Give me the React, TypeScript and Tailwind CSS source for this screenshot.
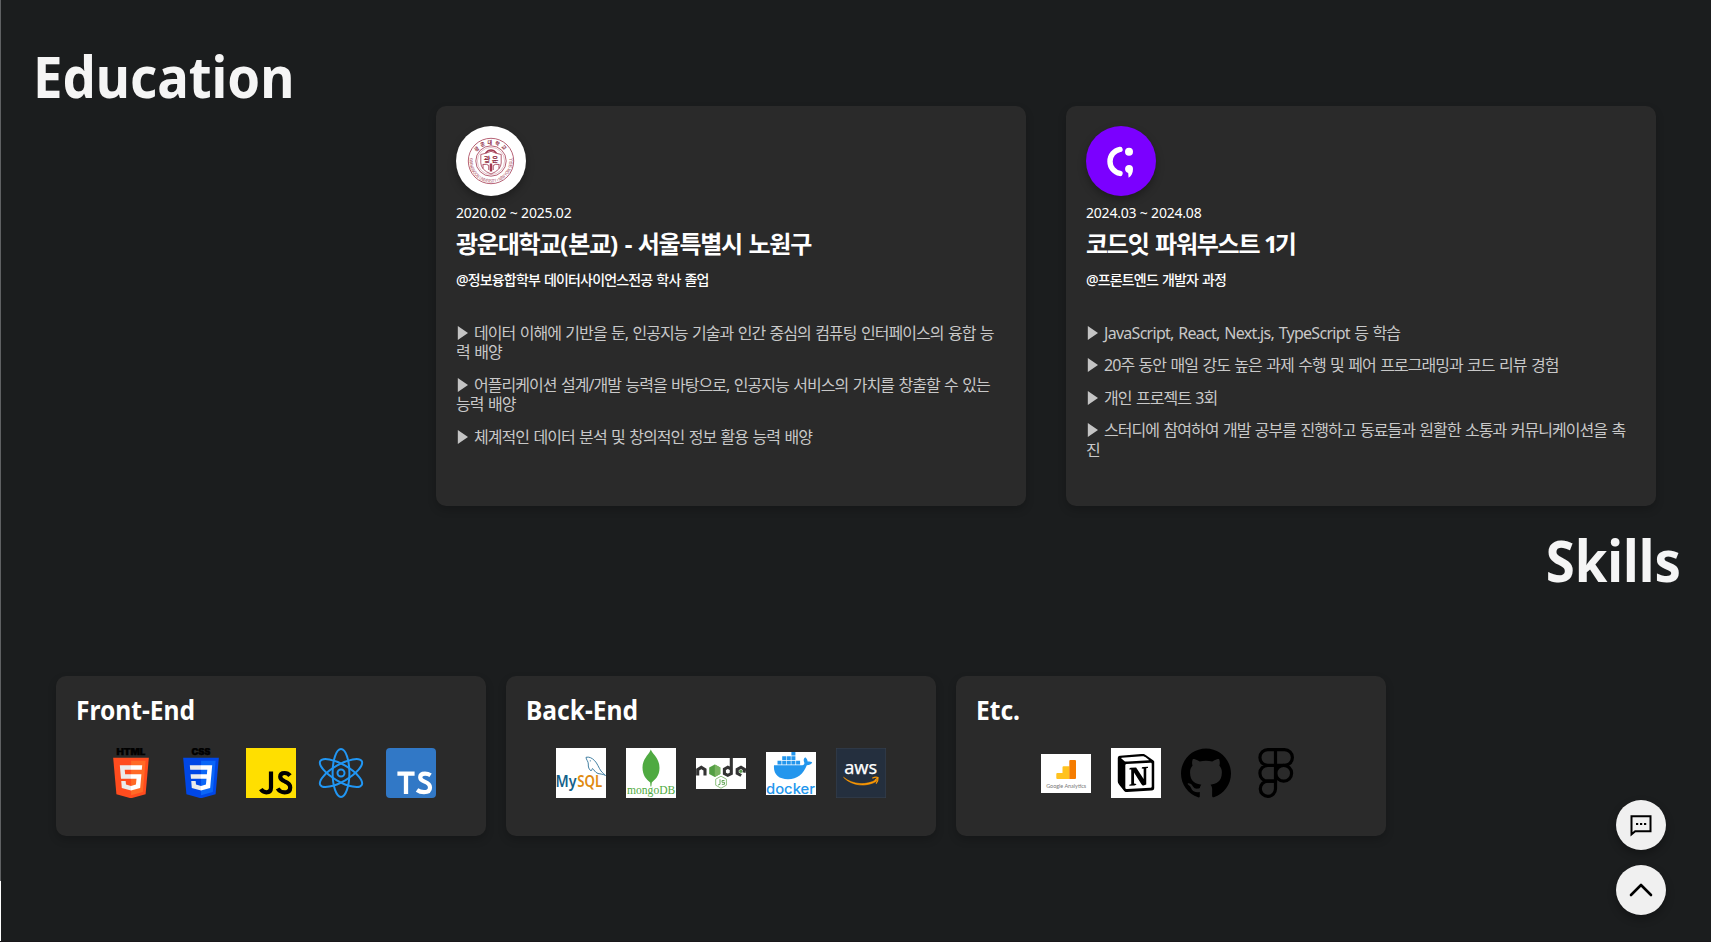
import type { ReactNode } from "react";
import { SiGithub, SiNotion } from "react-icons/si";

const FONT = "font-['Noto_Sans','Noto_Sans_CJK_KR',sans-serif]";

function Tile({ children }: { children: ReactNode }) {
  return <div className="flex size-[50px] shrink-0 items-center justify-center">{children}</div>;
}

function Html5() {
  return (
    <svg viewBox="0 0 50 50" className="size-[50px]">
      <text x="10.4" y="6.8" fontSize="8.6" fontWeight="900" fontFamily="Inter" textLength="29" lengthAdjust="spacingAndGlyphs" fill="#000" stroke="#000" strokeWidth=".4">HTML</text>
      <g transform="translate(4.8 9.8) scale(.0791)">
        <path fill="#ff4c1e" d="M71,460 30,0H481L440,460 255,512z" />
        <path fill="#ff6a26" d="M256,472 405,431 440,37H256z" />
        <path fill="#ebebeb" d="M256,208H181L176,150H256V94H114L129,265H256zM256,355 192,338 188,293H132L139,382 256,414z" />
        <path fill="#fff" d="M255,208V265H325L318,338 255,355V414L371,382 387,208zM255,94V150H392L397,94z" />
      </g>
    </svg>
  );
}

function Css3() {
  return (
    <svg viewBox="0 0 50 50" className="size-[50px]">
      <text x="15.4" y="6.8" fontSize="8.6" fontWeight="900" fontFamily="Inter" textLength="19" lengthAdjust="spacingAndGlyphs" fill="#000" stroke="#000" strokeWidth=".4">CSS</text>
      <g transform="translate(4.8 9.8) scale(.0791)">
        <path fill="#0047e6" d="M71,460 30,0H481L440,460 255,512z" />
        <path fill="#0a66f7" d="M256,472 405,431 440,37H256z" />
        <path fill="#ebebeb" d="M256,94H114L119,150H256zM256,208H124L129,265H256zM256,355 192,338 188,293H132L139,382 256,414z" />
        <path fill="#fff" d="M255,94V150H335L330,208H255V265H325L318,338 255,355V414L371,382 397,94z" />
      </g>
    </svg>
  );
}

function JsLogo() {
  return (
    <svg viewBox="0 0 50 50" className="size-[50px]">
      <rect width="50" height="50" fill="#ffdf00" />
      <path d="M25 23.5V39.5Q25 44.3 20.3 44.3 16.8 44.3 14.8 41.2" fill="none" stroke="#000" strokeWidth="4.2" />
      <path d="M44 27.6Q42 25 38.6 25 34.2 25 34.2 28.8 34.2 31.6 38.8 33.4 44.2 35.3 44.2 39.4 44.2 44.3 38.6 44.3 34 44.3 31.6 40.5" fill="none" stroke="#000" strokeWidth="4.2" />
    </svg>
  );
}

function ReactLogo() {
  return (
    <svg viewBox="0 0 50 50" className="size-[50px]" fill="none" stroke="#2196f3" strokeWidth="2">
      <ellipse cx="25" cy="25" rx="8.4" ry="23.9" />
      <ellipse cx="25" cy="25" rx="8.4" ry="23.9" transform="rotate(60 25 25)" />
      <ellipse cx="25" cy="25" rx="8.4" ry="23.9" transform="rotate(-60 25 25)" />
      <circle cx="25" cy="25" r="3.5" />
    </svg>
  );
}

function TsLogo() {
  return (
    <svg viewBox="0 0 50 50" className="size-[50px]">
      <rect width="50" height="50" rx="4" fill="#3178c6" />
      <path d="M11.4 25.7H28.6M20 25.7V46" fill="none" stroke="#fff" strokeWidth="4.3" />
      <path d="M44.6 27.3Q42 25.6 39 25.6 34.2 25.6 34.2 29.3 34.2 32 38.6 33.6 44 35.5 44 39.5 44 44.2 38 44.2 34 44.2 31 42" fill="none" stroke="#fff" strokeWidth="4.2" />
    </svg>
  );
}

function MySql() {
  return (
    <svg viewBox="0 0 50 50" className="size-[50px]">
      <rect width="50" height="50" fill="#fff" />
      <text x="-.5" y="39" fontSize="16" fontFamily="Noto Sans" fontWeight="600" fill="#14618a" textLength="21" lengthAdjust="spacingAndGlyphs">My</text>
      <text x="21.2" y="39" fontSize="16" fontFamily="Noto Sans" fontWeight="600" fill="#e08a10" textLength="25" lengthAdjust="spacingAndGlyphs">SQL</text>
      <path d="M30 9.3C33 8.5 36 10 38.5 12.5 41.5 15.5 42.5 19.5 45 23 46.5 25 48.5 26 49.5 27.5M30 9.3C30 11.5 32.5 13.5 32.3 16 32 18.5 33 22 35 22.7 36.3 22.6 35.8 20.5 36.6 20.5 38 21.5 39 24.5 42 25.5 44.5 26 47.5 26.2 49.5 27.5" fill="none" stroke="#2f7398" strokeWidth=".9" />
      <circle cx="34.3" cy="12.8" r=".6" fill="#2f7398" />
    </svg>
  );
}

function MongoDb() {
  return (
    <svg viewBox="0 0 50 50" className="size-[50px]">
      <rect width="50" height="50" fill="#fff" />
      <path d="M24.8 1.5C26.5 6 33.5 10 33.5 20 33.5 28 29 31.5 25.8 34.5L25.3 38.5H24.5L24.2 34.5C20.5 31.5 16.5 27.5 16.5 19.5 16.5 10.5 23.2 6.5 24.8 1.5z" fill="#4faa41" />
      <text x="1" y="46" fontSize="12" fontFamily="Liberation Serif" fill="#4faa41" textLength="48.3" lengthAdjust="spacingAndGlyphs">mongoDB</text>
    </svg>
  );
}

function NodeJs() {
  return (
    <svg viewBox="0 0 50 31" className="h-[31px] w-[50px]">
      <rect width="50" height="31" fill="#fff" />
      <g fill="none" stroke="#333" strokeWidth="3.1">
        <path d="M1.7 17.5V11.6L5.3 9.4 9 11.6V17.5" />
        <path d="M35.3 0V15.6L31.8 17.3 28.4 15.6V11.2L31.8 9.2 35.3 11.2" />
        <path d="M48 14.6 48.6 11.4 45 9.2 41.2 11.4V15.3L45.2 17.5" />
      </g>
      <path d="M44.8 11.5 46.4 12.4V14.2L44.8 15.1 43.2 14.2V12.4z" fill="#5b9b50" />
      <path d="M18.8 6.5 24.3 9.6V15.9L18.8 19 13.2 15.9V9.6z" fill="#539e43" />
      <path d="M18.8 6.5 24.3 9.6V15.9L18.8 19z" fill="#79b461" />
      <path d="M25 18.2 30.4 21.2V27.2L25 30.2 19.7 27.2V21.2z" fill="none" stroke="#8fc080" strokeWidth="1" />
      <path d="M24 21.3V26.3L22 27M28.5 22.5H26V24.3H28.5V26.3H25.8" fill="none" stroke="#67a95a" strokeWidth="1" />
    </svg>
  );
}

function Docker() {
  return (
    <svg viewBox="0 0 50 43" className="h-[43px] w-[50px]">
      <rect width="50" height="43" fill="#fff" />
      <g fill="#2396ed">
        <path d="M8 13.3H36.3C38.2 13 38.7 12 38.2 10.2 37.3 8.3 37.6 6.5 39.2 5.2 40.8 6.5 41.6 8 41.6 9.6 43.3 9.2 45 9.5 46.2 10.3 45.3 12.5 43.3 13.3 40.8 13.3 37.5 22 31.5 27.2 22 27.2 12.5 27.2 7.2 22.5 8 13.3z" />
        <path d="M11.5 8.7h4v3.7h-4zM16.2 8.7h4v3.7h-4zM20.8 8.7h4v3.7h-4zM25.4 8.7h4v3.7h-4zM30.1 8.7h4v3.7h-4zM16.2 4.3h4v3.7h-4zM20.8 4.3h4v3.7h-4zM25.4 4.3h4v3.7h-4zM25.4 0h4v3.6h-4z" />
      </g>
      <text x="0" y="42.2" fontSize="14" fontFamily="Inter" fontWeight="500" fill="#2396ed" textLength="49" lengthAdjust="spacingAndGlyphs">docker</text>
    </svg>
  );
}

function Aws() {
  return (
    <svg viewBox="0 0 50 50" className="size-[50px]">
      <rect width="50" height="50" fill="#242f3e" />
      <rect x=".25" y=".25" width="49.5" height="49.5" fill="none" stroke="#39434f" strokeWidth=".5" />
      <text x="8.2" y="26.2" fontSize="18.5" fontFamily="Noto Sans" fill="#fff" stroke="#fff" strokeWidth=".25" textLength="33" lengthAdjust="spacingAndGlyphs">aws</text>
      <path d="M7.5 29.3C17 37 31 37.5 40 31.8L40.9 33C31 39.3 16 38.3 7.5 29.3z" fill="#ff9900" stroke="#ff9900" strokeWidth=".6" />
      <path d="M36.3 30.3C38.5 29 41 29 42 29.5 42.2 31.5 41.5 34 40 35.6M41.8 29.6 39 32.5" fill="none" stroke="#ff9900" strokeWidth="1.2" />
    </svg>
  );
}

function Analytics() {
  return (
    <svg viewBox="0 0 50 39" className="h-[39px] w-[50px]">
      <rect width="50" height="39" fill="#fff" />
      <path d="M15.3 20Q15.3 19 16.3 19H21.5V13.3Q21.5 12.2 22.6 12.2H28.5V25H16.3Q15.3 25 15.3 24z" fill="#ffc21f" />
      <path d="M28.3 7Q28.3 6 29.3 6H34Q35 6 35 7V24Q35 25 34 25H28.3z" fill="#f57c00" />
      <text x="5.2" y="33.7" fontSize="6" fontFamily="Lato" fill="#777" textLength="40" lengthAdjust="spacingAndGlyphs">Google Analytics</text>
    </svg>
  );
}

function Notion() {
  return (
    <div className="flex size-[50px] items-center justify-center bg-white">
      <SiNotion className="size-[38px] text-black" />
    </div>
  );
}

function Figma() {
  return (
    <svg viewBox="0 0 50 50" className="size-[50px]" fill="none" stroke="#000" strokeWidth="3.2">
      <path d="M24.5 1.6H16.8a7.9 7.9 0 0 0 0 15.8H24.5zM24.5 1.6H33.5a7.9 7.9 0 0 1 0 15.8H24.5zM24.5 17.4H16.8a7.9 7.9 0 0 0 0 15.8H24.5z" />
      <path d="M24.5 33.2H16.8a7.6 7.6 0 1 0 7.7 7.6z" />
      <circle cx="32.7" cy="25.3" r="7.9" />
    </svg>
  );
}

function UniversitySeal() {
  return (
    <svg viewBox="0 0 70 70" className="size-[70px] rounded-full bg-white shadow-[0_4px_8px_rgba(0,0,0,0.3)]">
      <g fill="none" stroke="#a33a52">
        <circle cx="35" cy="35" r="22.7" strokeWidth=".8" />
        <circle cx="35" cy="35" r="15.2" strokeWidth=".8" />
        <circle cx="35" cy="35" r="13.6" strokeWidth=".3" />
        <path id="seal-top" d="M18.2 35a16.8 16.8 0 0 1 33.6 0" stroke="none" />
        <path id="seal-bottom" d="M14.25 29a21.6 21.6 0 1 0 41.5 0" stroke="none" />
        <path d="M24.8 28.5Q30 27.5 35 25.3 40 27.5 45.2 28.5V37Q45 44 35 48 25 44 24.8 37z" strokeWidth=".8" />
        <path d="M26.5 38.5Q31 37.5 32.8 39.5V44M43.5 38.5Q39 37.5 37.2 39.5V44M27 39V42.5M43 39V42.5" strokeWidth=".9" />
        <path d="M35 37.5V45.5" strokeWidth="2.4" />
        <path d="M29.5 27.2Q32 24 35 24 38 24 40.5 27.2" strokeWidth="1.3" />
      </g>
      <text fontSize="5" fontWeight="700" fontFamily="Noto Sans CJK KR" fill="#8c2740">
        <textPath href="#seal-top" startOffset="50%" textAnchor="middle" letterSpacing="2.2">광운대학교</textPath>
      </text>
      <text fontSize="4.6" fontFamily="Noto Sans" fill="#a33a52">
        <textPath href="#seal-bottom" startOffset="50%" textAnchor="middle" textLength="74" lengthAdjust="spacingAndGlyphs">KWANGWOON UNIVERSITY • NEW YORK SEOUL</textPath>
      </text>
      <text x="35" y="36.3" textAnchor="middle" fontSize="7.2" fontWeight="700" fontFamily="Noto Sans CJK KR" fill="#8c2740" textLength="14.5">광운</text>
    </svg>
  );
}

function CodeitLogo() {
  return (
    <svg viewBox="0 0 70 70" className="size-[70px] rounded-full bg-[#7b00ff] shadow-[0_4px_8px_rgba(0,0,0,0.3)]">
      <path d="M34 23.4A12.2 12.2 0 0 0 34 47.4" fill="none" stroke="#fff" strokeWidth="5.4" strokeLinecap="round" />
      <circle cx="43" cy="25.7" r="4" fill="#fff" />
      <path d="M43 39a4 4 0 0 1 4 4c0 4-1.6 7.2-4.4 8.8l-.4-4.9A4 4 0 0 1 43 39z" fill="#fff" />
    </svg>
  );
}

type Education = {
  logo: ReactNode;
  period: string;
  title: ReactNode;
  subtitle: string;
  points: ReactNode[];
};

const educations: Education[] = [
  {
    logo: <UniversitySeal />,
    period: "2020.02 ~ 2025.02",
    title: <>광운대학교<span className="tracking-normal">(</span>본교<span className="tracking-normal">)</span> - 서울특별시 노원구</>,
    subtitle: "@정보융합학부 데이터사이언스전공 학사 졸업",
    points: [
      "데이터 이해에 기반을 둔, 인공지능 기술과 인간 중심의 컴퓨팅 인터페이스의 융합 능\n력 배양",
      "어플리케이션 설계/개발 능력을 바탕으로, 인공지능 서비스의 가치를 창출할 수 있는\n능력 배양",
      "체계적인 데이터 분석 및 창의적인 정보 활용 능력 배양",
    ],
  },
  {
    logo: <CodeitLogo />,
    period: "2024.03 ~ 2024.08",
    title: <>코드잇 파워부스트<span className="tracking-[-3px]"> 1</span>기</>,
    subtitle: "@프론트엔드 개발자 과정",
    points: [
      <><span className="tracking-[-0.045em]">JavaScript, React, Next.js, TypeScript</span> 등 학습</>,
      "20주 동안 매일 강도 높은 과제 수행 및 페어 프로그래밍과 코드 리뷰 경험",
      "개인 프로젝트 3회",
      "스터디에 참여하여 개발 공부를 진행하고 동료들과 원활한 소통과 커뮤니케이션을 촉\n진",
    ],
  },
];

const skills: { title: string; icons: ReactNode[] }[] = [
  { title: "Front-End", icons: [<Html5 />, <Css3 />, <JsLogo />, <ReactLogo />, <TsLogo />] },
  { title: "Back-End", icons: [<MySql />, <MongoDb />, <NodeJs />, <Docker />, <Aws />] },
  { title: "Etc.", icons: [<Analytics />, <Notion />, <SiGithub className="size-[50px] text-black" />, <Figma />] },
];

function EducationCard({ item }: { item: Education }) {
  return (
    <article className="h-[400px] w-[590px] rounded-[10px] bg-[#2a2a2a] p-5 whitespace-nowrap shadow-[0_4px_8px_rgba(0,0,0,0.2)]">
      {item.logo}
      <p className="mt-[7px] h-5 text-sm leading-5 tracking-[-0.2px] text-white">{item.period}</p>
      <h3 className="mt-[5px] h-8 text-2xl leading-8 font-bold tracking-[-0.052em] text-white [word-spacing:1.6px]">{item.title}</h3>
      <p className="mt-[10px] h-5 text-sm leading-5 font-medium tracking-[-0.06em] text-white [word-spacing:1.2px]">{item.subtitle}</p>
      <ul className="mt-[34px] flex flex-col gap-[13px]">
        {item.points.map((point, i) => (
          <li key={i} className="text-base leading-[19.4px] tracking-[-0.06em] whitespace-pre text-[#c8c8c8] [word-spacing:1.2px]">
            <svg viewBox="0 0 18 16" className="inline-block h-4 w-[18px] align-[-2px]">
              <path d="M1.8 1 12 8 1.8 15z" fill="#c4c4c4" />
            </svg>
            {point}
          </li>
        ))}
      </ul>
    </article>
  );
}

export default function App() {
  return (
    <div className={`${FONT} flex h-[942px] w-full overflow-hidden border-b border-[#19171a] bg-[#1b1d1e]`}>
      <div className="flex w-px flex-col">
        <div className="h-[881px] bg-[#5f6163]" />
        <div className="flex-1 bg-white" />
      </div>
      <main className="flex-1">
        <section className="h-[506px]">
          <h2 className="h-[106px] pt-[35px] pl-[32px] text-[58px] leading-[82px] font-bold text-[#f5f5f5]">
            <span className="inline-block origin-left scale-x-[0.908]">Education</span>
          </h2>
          <div className="flex gap-10 pl-[435px]">
            {educations.map((item) => <EducationCard key={item.period} item={item} />)}
          </div>
        </section>
        <section>
          <h2 className="h-[170px] pt-[13px] pr-[30px] text-right text-[58px] leading-[82px] font-bold text-[#f5f5f5]">
            <span className="inline-block origin-right scale-x-[0.908]">Skills</span>
          </h2>
          <div className="flex gap-5 pl-[55px]">
            {skills.map((group) => (
              <article key={group.title} className="h-40 w-[430px] rounded-[10px] bg-[#2a2a2a] p-5 shadow-[0_4px_8px_rgba(0,0,0,0.2)]">
                <h3 className="-mt-px h-[53px] text-[27px] leading-[29px] font-bold text-white">
                  <span className="inline-block origin-left scale-x-[0.91]">{group.title}</span>
                </h3>
                <div className="flex justify-center gap-5">
                  {group.icons.map((icon, i) => <Tile key={i}>{icon}</Tile>)}
                </div>
              </article>
            ))}
          </div>
        </section>
      </main>
      <div className="fixed right-[45px] bottom-[27px] flex flex-col gap-[15px]">
        <button className="flex size-[50px] items-center justify-center rounded-full bg-[#f0f0f0] shadow-[0_4px_8px_rgba(0,0,0,0.3)]">
          <svg viewBox="0 0 24 24" className="size-6" fill="none" stroke="#000" strokeWidth="2">
            <path d="M2.5 3.2H21.5V18.3H6.2L2.5 21.3z" />
            <path d="M7 11H9.2M11 11H13.2M15 11H17.2" />
          </svg>
        </button>
        <button className="flex size-[50px] items-center justify-center rounded-full bg-[#f0f0f0] shadow-[0_4px_8px_rgba(0,0,0,0.3)]">
          <svg viewBox="0 0 24 24" className="size-6" fill="none" stroke="#000" strokeWidth="2.6" strokeLinecap="round" strokeLinejoin="round">
            <path d="M2 17 12 7 22 17" />
          </svg>
        </button>
      </div>
    </div>
  );
}
